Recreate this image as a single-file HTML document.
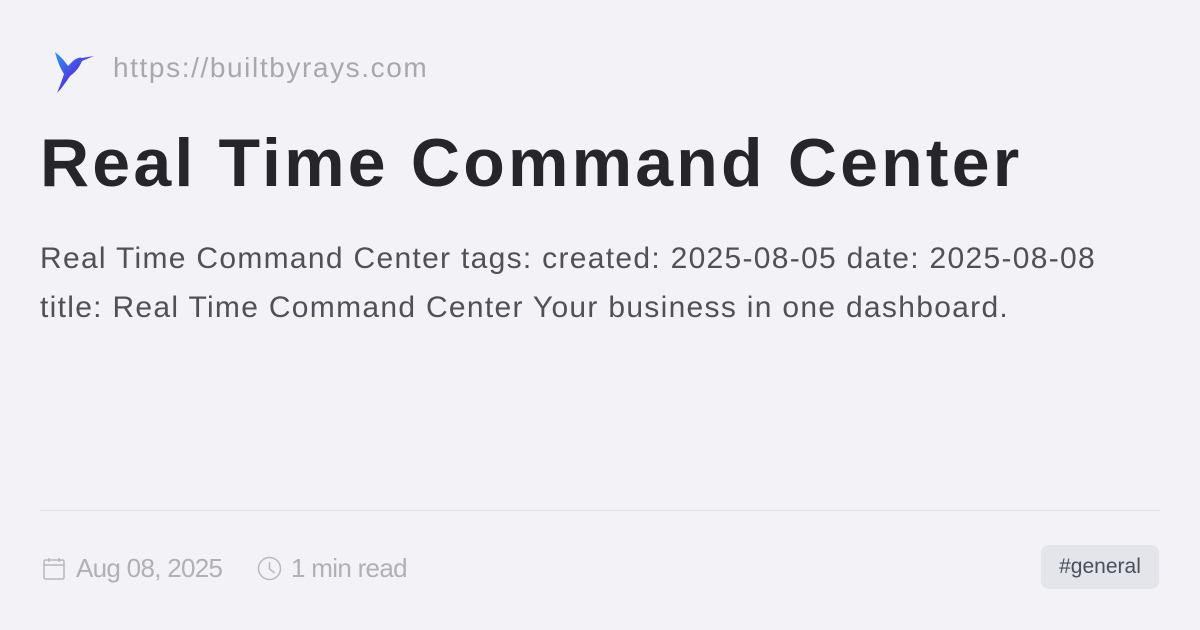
<!DOCTYPE html>
<html><head><meta charset="utf-8"><style>
html,body{margin:0;padding:0}
body{width:1200px;height:630px;background:#f2f2f7;font-family:"Liberation Sans",sans-serif;position:relative;overflow:hidden}
.url{position:absolute;left:113px;top:52px;font-size:28px;color:#a8a8ae;letter-spacing:1.6px}
h1{position:absolute;left:40px;top:124px;margin:0;font-size:68px;font-weight:bold;color:#26262a;letter-spacing:3.2px;white-space:nowrap}
.desc{position:absolute;left:40px;top:234px;font-size:30px;line-height:49px;color:#505056;white-space:nowrap;letter-spacing:1.3px}
.hr{position:absolute;left:40px;right:40px;top:510px;height:1px;background:#e0e0e6}
.meta{position:absolute;top:553px;font-size:26px;color:#b0b0b6;letter-spacing:-0.7px}
.tag{position:absolute;left:1041px;top:545px;width:118px;height:44px;border-radius:8px;background:#e4e5ea;color:#4a4f5a;font-size:21px;line-height:44px;text-align:center}
</style></head><body>
<svg style="position:absolute;left:52px;top:48px" width="44" height="48" viewBox="0 0 44 48">
<defs><linearGradient id="g" x1="0" y1="0" x2="1" y2="1"><stop offset="0" stop-color="#2d9bf0"/><stop offset="0.5" stop-color="#4b3fe0"/><stop offset="1" stop-color="#7a2bd8"/></linearGradient></defs>
<path d="M3 4 C8 8 12 12 16 18 L20 14 C24 10 28 9 30 10 L42 8 L30 13 C28 18 24 24 18 28 C14 34 10 40 5 45 C8 38 10 32 12 26 C8 20 5 12 3 4Z" fill="url(#g)"/>
</svg>
<div class="url">https://builtbyrays.com</div>
<h1>Real Time Command Center</h1>
<div class="desc">Real Time Command Center tags: created: 2025-08-05 date: 2025-08-08<br>title: Real Time Command Center Your business in one dashboard.</div>
<div class="hr"></div>
<svg style="position:absolute;left:43px;top:557px" width="22" height="24" viewBox="0 0 22 24" fill="none" stroke="#b8b8be" stroke-width="1.5"><rect x="1" y="3" width="20" height="19" rx="1.5"/><path d="M1 8h20M6 1v4M16 1v4"/></svg>
<div class="meta" style="left:76px">Aug 08, 2025</div>
<svg style="position:absolute;left:257px;top:556px" width="25" height="25" viewBox="0 0 25 25" fill="none" stroke="#b8b8be" stroke-width="1.5"><circle cx="12.5" cy="12.5" r="11"/><path d="M12.5 6v7l5 4"/></svg>
<div class="meta" style="left:291px">1 min read</div>
<div class="tag">#general</div>
</body></html>
